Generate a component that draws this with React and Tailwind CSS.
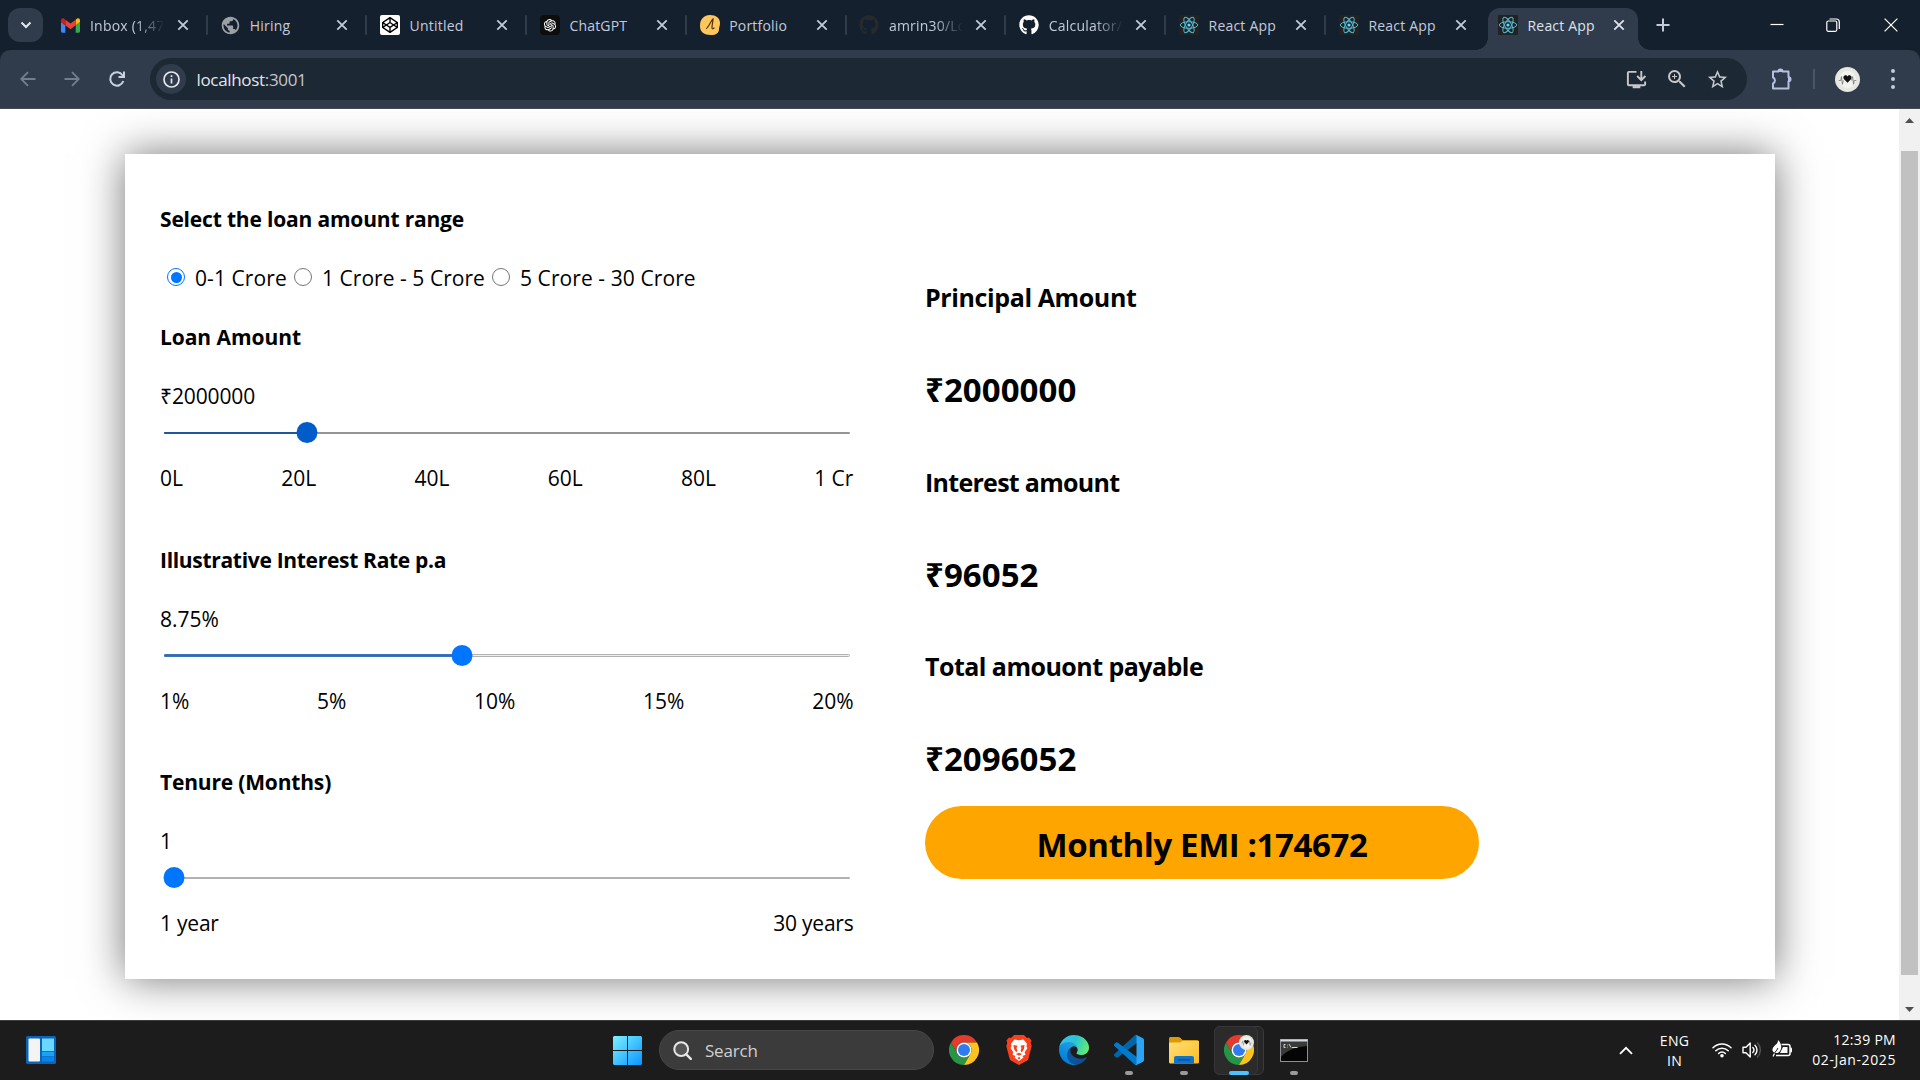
import React from "react";
import { FaGithub, FaCodepen } from "react-icons/fa";
import { AiOutlineOpenAI } from "react-icons/ai";
import { MdInstallDesktop, MdStarBorder, MdZoomIn, MdPublic } from "react-icons/md";

/* ---------- brand marks ---------- */

const Gmail = () => (
  <svg viewBox="52 42 88 66" className="h-[15px] w-[19px]">
    <path fill="#4285f4" d="M58 108h14V74L52 59v43c0 3.32 2.69 6 6 6" />
    <path fill="#34a853" d="M120 108h14c3.32 0 6-2.69 6-6V59l-20 15" />
    <path fill="#fbbc04" d="M120 48v26l20-15v-8c0-7.42-8.47-11.65-14.4-7.2" />
    <path fill="#ea4335" d="M72 74V48l24 18 24-18v26L96 92" />
    <path fill="#c5221f" d="M52 51v8l20 15V48l-5.6-4.2c-5.94-4.45-14.4-.22-14.4 7.2" />
  </svg>
);

const Globe = () => <MdPublic className="size-[21px] text-[#9aa0a6]" />;

const Codepen = () => (
  <div className="flex size-5 items-center justify-center rounded-[2px] bg-white">
    <FaCodepen className="size-4 text-black" />
  </div>
);

const OpenAI = () => (
  <div className="flex size-5 items-center justify-center rounded-[4px] bg-[#0d0d0d]">
    <AiOutlineOpenAI className="size-4 text-white" />
  </div>
);

const Portfolio = () => (
  <svg viewBox="0 0 20 20" className="size-5">
    <path d="M10 0C16 0 20 3 20 8c0 3-1 4-1 6 0 4-3 6-8 6C4 20 0 17 0 11 0 4 4 0 10 0z" fill="#ffc65c" />
    <path d="M6 13.500c2 0 4.800-7.500 7-9.500.2 3-1.400 6.500-1 9 .4 1.400 1.700.6 2.400-.4" fill="none" stroke="#4b3510" strokeWidth="1.200" />
  </svg>
);

const GithubDark = () => <FaGithub className="size-5 text-[#262a2d]" />;
const GithubLight = () => <FaGithub className="size-5 text-white" />;

const ReactMark = () => (
  <svg viewBox="0 0 20 20" className="size-5">
    <rect width="20" height="20" rx="1" fill="#222" />
    <g fill="none" stroke="#53b9d3" strokeWidth="1">
      <ellipse cx="10" cy="10" rx="8.700" ry="3.300" />
      <ellipse cx="10" cy="10" rx="8.700" ry="3.300" transform="rotate(60 10 10)" />
      <ellipse cx="10" cy="10" rx="8.700" ry="3.300" transform="rotate(120 10 10)" />
    </g>
    <circle cx="10" cy="10" r="1.600" fill="#61dafb" />
  </svg>
);

const Chrome = ({ className = "size-[30px]" }) => (
  <svg viewBox="0 0 48 48" className={className}>
    <path fill="#e33b2e" d="M24 12H44.8A24 24 0 0 0 3.200 12L13.600 30A12 12 0 0 1 24 12z" />
    <path fill="#269546" d="M13.600 30L3.200 12A24 24 0 0 0 24 48L34.400 30A12 12 0 0 1 13.600 30z" />
    <path fill="#fcc31e" d="M34.400 30L24 48A24 24 0 0 0 44.800 12H24A12 12 0 0 1 34.400 30z" />
    <circle cx="24" cy="24" r="12" fill="#fff" />
    <circle cx="24" cy="24" r="9.600" fill="#2f7bf0" />
  </svg>
);

const Edge = () => (
  <svg viewBox="0 0 256 256" className="size-[30px]">
    <defs>
      <linearGradient id="edgeA" x1="0" y1="0" x2="1" y2="0">
        <stop offset="0" stopColor="#0c59a4" />
        <stop offset="1" stopColor="#114a8b" />
      </linearGradient>
      <linearGradient id="edgeB" x1="0.700" y1="0.200" x2="0.300" y2="1">
        <stop offset="0" stopColor="#1b9de2" />
        <stop offset="1" stopColor="#0078d7" />
      </linearGradient>
      <linearGradient id="edgeC" x1="0" y1="0.300" x2="1" y2="0.600">
        <stop offset="0" stopColor="#35c1f1" />
        <stop offset="0.500" stopColor="#2bc3d2" />
        <stop offset="1" stopColor="#66eb6e" />
      </linearGradient>
    </defs>
    <g transform="translate(-4.630 -4.920)">
      <path fill="url(#edgeA)" d="M235.68 195.46a93.73 93.73 0 0 1-10.54 4.71 101.87 101.87 0 0 1-35.9 6.46c-47.32 0-88.54-32.55-88.54-74.32A31.48 31.48 0 0 1 117.13 105c-42.8 1.8-53.8 46.4-53.8 72.53 0 73.88 68.09 81.37 82.76 81.37 7.91 0 19.84-2.3 27-4.56l1.31-.44a128.34 128.34 0 0 0 66.6-52.8 4 4 0 0 0-5.32-5.64z" />
      <path fill="url(#edgeB)" d="M110.34 246.34A79.2 79.2 0 0 1 87.6 225a80.72 80.72 0 0 1 29.53-120c3.120-1.470 8.450-4.130 15.540-4a32.350 32.350 0 0 1 25.690 13 31.880 31.880 0 0 1 6.360 18.660c0-.21 24.460-79.600-80-79.600-43.900 0-80 41.660-80 78.210a130.150 130.150 0 0 0 12.110 56 128 128 0 0 0 156.380 67.110 75.550 75.550 0 0 1-62.780-8z" />
      <path fill="url(#edgeC)" d="M156.94 153.78c-.81 1.050-3.300 2.500-3.300 5.660 0 2.610 1.700 5.120 4.720 7.230 14.380 10 41.490 8.680 41.560 8.680a59.560 59.560 0 0 0 30.270-8.350 61.380 61.380 0 0 0 30.430-52.880c.26-22.410-8-37.310-11.340-43.910-21.190-41.440-66.920-65.280-116.670-65.280a128 128 0 0 0-128 126.200c.48-36.540 36.800-66.050 80-66.050 3.500 0 23.460.34 42 10.070 16.340 8.580 24.900 18.940 30.850 29.210 6.180 10.670 7.280 24.150 7.280 29.520s-2.740 13.330-7.800 19.900z" />
    </g>
  </svg>
);

const VSCode = () => (
  <svg viewBox="0 0 100 100" className="size-[30px]">
    <path fill="#0065a9" d="M96.4614 10.7962L75.8569 .8755C73.4719-.2728 70.6217.2116 68.75 2.0833L1.2986 63.5832C-.5157 65.2373-.5136 68.0937 1.3031 69.7452L6.8127 74.754C8.2979 76.1042 10.5347 76.2036 12.1338 74.9905L93.3609 13.3699C96.086 11.3026 100 13.2462 100 16.6667V16.4275C100 14.0265 98.6246 11.8378 96.4614 10.7962Z" />
    <path fill="#007acc" d="M96.4614 89.2038L75.8569 99.1245C73.4719 100.273 70.6217 99.7884 68.75 97.9167L1.2986 36.4169C-.5157 34.7627-.5136 31.9063 1.3031 30.2548L6.8127 25.246C8.2979 23.8958 10.5347 23.7964 12.1338 25.0095L93.3609 86.6301C96.086 88.6974 100 86.7538 100 83.3333V83.5726C100 85.9735 98.6246 88.1622 96.4614 89.2038Z" />
    <path fill="#2aa4f4" d="M75.8578 99.1263C73.4721 100.274 70.6219 99.7885 68.75 97.9166C71.0564 100.223 75 98.5895 75 95.3278V4.6721C75 1.4104 71.0564-.2231 68.75 2.0833C70.6219.2114 73.4721-.2737 75.8578.8736L96.4587 10.7807C98.6234 11.8217 100 14.0112 100 16.4132V83.5871C100 85.9891 98.6234 88.1786 96.4586 89.2196L75.8578 99.1263Z" />
  </svg>
);

const Brave = () => (
  <svg viewBox="0 0 26 30" className="h-[30px] w-[26px]">
    <path d="M8 0h10l3 3 2-.4L25.500 5.500 24.700 8l1 3-3.200 12.500c-.3 1-.9 1.700-1.700 2.300L13 30l-7.800-4.200c-.8-.6-1.400-1.300-1.700-2.300L.3 11l1-3L.5 5.500 3 2.600 5 3z" fill="#f8401c" />
    <path d="M8.500 4.500l4.500.8 4.500-.8 3.500 4.300-.6 2.400 1.100 1.800-2.800 4.200.8 2.600-3 1.200 1 1.500L13 26l-4.500-3.500 1-1.500-3-1.200.8-2.600L4.500 13l1.100-1.800L5 8.800z" fill="#fff" />
    <path d="M7.500 10l4 .8-1 2.200.9 3-1.200 1.200-2.200-3.200zM18.500 10l-4 .8 1 2.200-.9 3 1.200 1.200 2.200-3.200zM9.800 19l3.200-1.200 3.200 1.200-3.200 1.700zM11.300 23l1.700-.9 1.700.9-1.700 1.400z" fill="#f8401c" />
  </svg>
);

const Folder = () => (
  <svg viewBox="0 0 30 27" className="mt-px h-[27px] w-[30px]">
    <defs>
      <linearGradient id="folder" x1="0" y1="0" x2="1" y2="1">
        <stop offset="0" stopColor="#ffe07a" />
        <stop offset="1" stopColor="#fdbc22" />
      </linearGradient>
    </defs>
    <path d="M0 1.500C0 .7.7 0 1.500 0h8c.6 0 1 .2 1.500.6L13.500 3H28c1 0 2 .8 2 2v4H0z" fill="#dc9a05" />
    <path d="M0 6.500C0 6 .4 5.500 1 5.500h9.500c.6 0 1-.2 1.500-.6L13 4h16c.6 0 1 .4 1 1v20c0 .8-.6 1.500-1.500 1.500h-27C.6 26.500 0 25.800 0 25z" fill="url(#folder)" />
    <path d="M5 26.500V21c0-1.100.9-2 2-2h16c1.100 0 2 .9 2 2v5.500z" fill="#1173c8" />
    <rect x="8.500" y="22.200" width="13" height="1.200" rx=".6" fill="#084f94" />
  </svg>
);

const Terminal = () => (
  <svg viewBox="0 0 28 23" className="h-[23px] w-7">
    <rect x=".5" y=".5" width="27" height="22" fill="#050505" stroke="#8b9095" />
    <path d="M1 1h26v6C14 8 6 12 1 18z" fill="#3a3a3a" />
    <path d="M.5 1.500h27" stroke="#d5d8dc" strokeWidth="2" />
    <path d="M5.500 5.500H4v3h1.500M7.500 5.800v.6M7.500 7.800v.6M9 5l2 3.500M12 8.500h5.500" stroke="#e8e8e8" strokeWidth=".9" fill="none" />
  </svg>
);

const WindowsLogo = () => (
  <svg viewBox="0 0 29 29" className="size-[29px]">
    <defs>
      <linearGradient id="win" x1="0" y1="0" x2="1" y2="1">
        <stop offset="0" stopColor="#7df0ff" />
        <stop offset="1" stopColor="#0a95ff" />
      </linearGradient>
    </defs>
    <path fill="url(#win)" d="M1 0h13v14H0V1zM15 0h13l1 1v13H15zM0 15h14v14H1l-1-1zM15 15h14v13l-1 1H15z" />
  </svg>
);

const Widgets = () => (
  <svg viewBox="0 0 30 28" className="h-7 w-[30px]">
    <rect width="30" height="28" rx="1.500" fill="#0a64b8" />
    <rect x="2.500" y="2.500" width="11.500" height="23" rx="1" fill="#f4f4f4" />
    <rect x="16" y="2.500" width="12" height="12.500" fill="#68d8ff" />
    <rect x="16" y="15.700" width="12" height="4.500" fill="#1ba2f8" />
    <rect x="16" y="20.700" width="12" height="4.800" fill="#0a84ea" />
  </svg>
);

const Avatar = ({ className = "size-[25px]" }) => (
  <svg viewBox="0 0 26 26" className={className}>
    <circle cx="13" cy="13" r="13" fill="#e4e8e0" />
    <circle cx="13" cy="13" r="9" fill="#f1f3ee" />
    <path d="M4 14h2l.7-4 1 8 1-4M17.300 14l1-4 1 8 .8-4h2" fill="none" stroke="#777" strokeWidth=".9" />
    <path d="M13 16.500l-3.600-3.800c-1.400-1.800-.3-4.200 1.600-4.200 1 0 1.600.5 2 1.300.4-.8 1-1.300 2-1.300 1.900 0 3 2.400 1.600 4.200z" fill="#111" />
  </svg>
);

/* ---------- browser chrome ---------- */

const Close = ({ className = "text-[#c2cadb]" }) => (
  <svg viewBox="0 0 12 12" className={`size-3 shrink-0 ${className}`}>
    <path d="M1.300 1.300l9.400 9.400M10.700 1.300l-9.400 9.400" stroke="currentColor" strokeWidth="1.800" />
  </svg>
);

const tabs = [
  { title: "Inbox (1,47", Icon: Gmail, fade: true },
  { title: "Hiring", Icon: Globe },
  { title: "Untitled", Icon: Codepen },
  { title: "ChatGPT", Icon: OpenAI },
  { title: "Portfolio", Icon: Portfolio },
  { title: "amrin30/Lo", Icon: GithubDark, fade: true },
  { title: "Calculator/", Icon: GithubLight, fade: true },
  { title: "React App", Icon: ReactMark },
  { title: "React App", Icon: ReactMark, last: true },
];

const fadeMask = "[mask-image:linear-gradient(to_right,black_62%,transparent_100%)]";

function Tab({ title, Icon, fade, last }) {
  return (
    <div className="flex h-[50px] w-[159.8px] shrink-0 items-center pl-[12px]">
      <div className="flex w-[21px] shrink-0 justify-center"><Icon /></div>
      <span className={`mt-px ml-[9px] w-[74px] overflow-hidden text-[14px] leading-5 tracking-[0.200px] whitespace-nowrap text-[#c2cadb] ${fade ? fadeMask : ""}`}>{title}</span>
      <Close className="ml-[12.500px] text-[#c2cadb]" />
      {!last && <div className="ml-[17px] h-5 w-[2px] rounded bg-[#303b4b]" />}
    </div>
  );
}

function TabStrip() {
  return (
    <div className="flex h-[50px] items-center bg-[#15202e]">
      <div className="ml-2 flex h-[34px] w-[35px] items-center justify-center rounded-xl bg-[#303b4b]">
        <svg viewBox="0 0 12 8" className="h-2 w-3"><path d="M1.500 1.500L6 6l4.500-4.500" fill="none" stroke="#e3e7ef" strokeWidth="2" /></svg>
      </div>
      <div className="ml-[5px] flex">
        {tabs.map((t, i) => <Tab key={i} {...t} />)}
      </div>
      <div className="-ml-[10.200px] flex h-[50px] items-end">
        <div className="h-3 w-3 bg-[radial-gradient(circle_at_0_0,#15202e_11.500px,#303b4b_12px)]" />
        <div className="flex h-[42px] w-[150px] items-center rounded-t-xl bg-[#303b4b] pb-2 pl-[10px]">
          <ReactMark />
          <span className="mt-px ml-[9.500px] w-[74px] text-[14px] leading-5 tracking-[0.200px] whitespace-nowrap text-[#dee3ee]">React App</span>
          <Close className="ml-[11.500px] text-[#dee3ee]" />
        </div>
        <div className="h-3 w-3 bg-[radial-gradient(circle_at_100%_0,#15202e_11.500px,#303b4b_12px)]" />
      </div>
      <svg viewBox="0 0 14 14" className="ml-[6px] size-[14px]"><path d="M7 .5v13M.5 7h13" stroke="#c2cadb" strokeWidth="2" /></svg>
      <svg viewBox="0 0 14 14" className="ml-[100px] size-[14px]"><path d="M.5 6.500h13" stroke="#fff" strokeWidth="1.200" /></svg>
      <svg viewBox="0 0 14 14" className="ml-[42px] size-[14px]">
        <path d="M3.500 1h6.800A3 3 0 0 1 13.300 4v7" fill="none" stroke="#fff" strokeWidth="1.200" />
        <rect x=".8" y="3" width="10" height="10.300" rx="1.500" fill="none" stroke="#fff" strokeWidth="1.200" />
      </svg>
      <svg viewBox="0 0 14 14" className="ml-[44px] size-[14px]"><path d="M.6.6l12.800 12.800M13.400.6L.6 13.400" stroke="#fff" strokeWidth="1.200" /></svg>
    </div>
  );
}

const Arrow = ({ className = "" }) => (
  <svg viewBox="0 0 16 16" className={`size-4 ${className}`}>
    <path d="M15.500 8H1.500M8 1.200L1.200 8 8 14.800" fill="none" stroke="#737d8d" strokeWidth="1.800" />
  </svg>
);

function Toolbar() {
  return (
    <div className="bg-[#15202e]">
      <div className="flex h-[59px] items-center rounded-t-[10px] border-b border-[#4a4a52] bg-[#303b4b]">
        <Arrow className="ml-5" />
        <Arrow className="ml-[28px] rotate-180" />
        <svg viewBox="0 0 18 18" className="ml-[28px] size-[18px]">
          <path d="M15.300 11A6.700 6.700 0 1 1 14.500 5.200L16 7" fill="none" stroke="#c9d0e0" strokeWidth="2" />
          <path d="M16 1.500v5.500H10.500" fill="none" stroke="#c9d0e0" strokeWidth="2" />
        </svg>
        <div className="ml-6 flex h-[42px] w-[1597px] items-center rounded-full bg-[#1c2935]">
          <div className="ml-[6px] flex size-[30px] items-center justify-center rounded-full bg-[#303b4b]">
            <svg viewBox="0 0 17 17" className="size-[17px]">
              <circle cx="8.500" cy="8.500" r="7.500" fill="none" stroke="#e3e7ef" strokeWidth="1.700" />
              <path d="M8.500 7.500v5M8.500 4.300v1.700" stroke="#e3e7ef" strokeWidth="1.700" />
            </svg>
          </div>
          <span className="mt-px ml-[10.500px] text-[17px] leading-6 tracking-[-0.330px] text-[#e3e5e8]">localhost<span className="text-[#c3c7cc]">:3001</span></span>
          <div className="mr-[18px] ml-auto flex items-center gap-[17px] text-[#c7c7cb]">
            <MdInstallDesktop className="size-[23px]" />
            <MdZoomIn className="size-[24px]" />
            <MdStarBorder className="size-[23px]" />
          </div>
        </div>
        <svg viewBox="0 0 22 22" className="mb-px ml-[24px] size-[22px]">
          <path d="M2 3.500h5.500a2 2 0 0 1 4 0H17.500v5.700a2 2 0 0 1 0 4V20.500H2v-5a3.300 3.300 0 0 0 0-6z" fill="none" stroke="#b4c2e0" strokeWidth="2" strokeLinejoin="round" />
          <path d="M7.500 3.500a2 2 0 0 1 4 0zM17.500 9.200a2 2 0 0 1 0 4z" fill="#b4c2e0" stroke="#b4c2e0" />
        </svg>
        <div className="ml-[20px] h-5 w-[2px] bg-[#4b5566]" />
        <Avatar className="ml-[20px] size-[25px]" />
        <div className="ml-[31px] flex flex-col gap-[4px]">
          <div className="size-1 rounded-full bg-[#c2cadb]" />
          <div className="size-1 rounded-full bg-[#c2cadb]" />
          <div className="size-1 rounded-full bg-[#c2cadb]" />
        </div>
      </div>
    </div>
  );
}

/* ---------- calculator page ---------- */

function Radio({ checked, label, className }) {
  return (
    <label className={`flex shrink-0 items-center ${className}`}>
      <span className={`mb-[2px] flex size-[18px] shrink-0 items-center justify-center rounded-full border-[1.500px] ${checked ? "border-[#0075ff]" : "border-[#767676]"}`}>
        {checked && <span className="size-[11px] rounded-full bg-[#0075ff]" />}
      </span>
      <span className="ml-[10px] whitespace-nowrap">{label}</span>
    </label>
  );
}

function Slider({ fill, thin, fillClass, trackClass, thumbClass }) {
  return (
    <div className="relative mx-[4px] mt-[12px] flex h-[21px] items-center">
      <div className={`w-full rounded-sm ${thin ? "mt-px h-[2px]" : "h-[3px] border"} ${trackClass}`}>
        <div className={`rounded-sm ${thin ? "h-[2px]" : "-mt-px -ml-px h-[3px]"} ${fillClass}`} style={{ width: fill }} />
      </div>
      <div className={`absolute top-0 size-[21px] -translate-x-1/2 rounded-full ${thumbClass}`} style={{ left: fill }} />
    </div>
  );
}

function Section({ title, titleClass, value, valueClass = "", slider, marks, marksClass = "" }) {
  return (
    <div>
      <h3 className={`mb-[31px] font-bold ${titleClass}`}>{title}</h3>
      <p className={valueClass}>{value}</p>
      <Slider {...slider} />
      <div className={`mr-[0.500px] flex justify-between ${marksClass}`}>
        {marks.map((m) => <span key={m}>{m}</span>)}
      </div>
    </div>
  );
}

function Calculator() {
  return (
    <div className="mt-[45px] ml-[125px] flex h-[825px] w-[1650px] bg-white text-black shadow-[0_0_40px_#757575]">
      <div className="ml-[35px] w-[694px] pt-[51px] text-[21px] leading-[28px]">
        <h3 className="font-bold tracking-[-0.180px]">Select the loan amount range</h3>
        <div className="my-[31px] flex pl-[7px]">
          <Radio checked label="0-1 Crore" className="w-[127px] tracking-[0.080px]" />
          <Radio label="1 Crore - 5 Crore" className="w-[198px] tracking-[0.040px]" />
          <Radio label="5 Crore - 30 Crore" className="tracking-[0.080px]" />
        </div>
        <Section
          title="Loan Amount" titleClass="tracking-[-0.060px]"
          value="₹2000000" valueClass="tracking-[-0.130px]"
          slider={{ fill: "143px", thin: true, fillClass: "bg-[#21559c]", trackClass: "bg-[#949494]", thumbClass: "bg-[#005cc8]" }}
          marks={["0L", "20L", "40L", "60L", "80L", "1 Cr"]} marksClass="mt-[21px] mb-[54px]"
        />
        <Section
          title="Illustrative Interest Rate p.a" titleClass="tracking-[-0.310px]"
          value="8.75%"
          slider={{ fill: "298px", fillClass: "border-y border-[#3a73b8] bg-[#0075ff]", trackClass: "border-[#b2b2b2] bg-[#efefef]", thumbClass: "bg-[#0075ff]" }}
          marks={["1%", "5%", "10%", "15%", "20%"]} marksClass="mt-[21px] mb-[53px]"
        />
        <Section
          title="Tenure (Months)" titleClass="tracking-[-0.180px]"
          value="1"
          slider={{ fill: "10px", thin: true, fillClass: "bg-[#0075ff]", trackClass: "bg-[#b2b2b2]", thumbClass: "bg-[#0075ff]" }}
          marks={["1 year", "30 years"]} marksClass="mt-[21px] tracking-[-0.220px]"
        />
      </div>
      <div className="ml-[71px] pt-[126px] font-bold">
        <h2 className="text-[25px] leading-[34px] tracking-[-0.390px]">Principal Amount</h2>
        <p className="mt-[54px] text-[33px] leading-[44px] tracking-[0.050px]">₹2000000</p>
        <h2 className="mt-[53px] text-[25px] leading-[34px] tracking-[-0.720px]">Interest amount</h2>
        <p className="mt-[54px] text-[33px] leading-[44px] tracking-[0.050px]">₹96052</p>
        <h2 className="mt-[52px] text-[25px] leading-[34px] tracking-[-0.530px]">Total amouont payable</h2>
        <p className="mt-[54px] text-[33px] leading-[44px] tracking-[0.050px]">₹2096052</p>
        <div className="mt-[25px] h-[73px] w-[554px] rounded-full bg-[#ffa500] text-center text-[33px] leading-[78px] tracking-[-0.400px]">
          Monthly EMI :174672
        </div>
      </div>
    </div>
  );
}

function Scrollbar() {
  return (
    <div className="flex h-full w-[21px] flex-col items-center bg-[#f1f1f1]">
      <svg viewBox="0 0 9 5" className="mt-[9px] h-[5px] w-[9px]"><path d="M0 5L4.500 0 9 5z" fill="#505050" /></svg>
      <div className="mt-[28px] h-[824px] w-[17px] bg-[#c1c1c1]" />
      <svg viewBox="0 0 9 5" className="mt-[32px] h-[5px] w-[9px]"><path d="M0 0l4.500 5L9 0z" fill="#505050" /></svg>
    </div>
  );
}

/* ---------- taskbar ---------- */

function TaskbarApp({ children, active, dot }) {
  return (
    <div className="flex h-full w-[55px] shrink-0 items-center justify-center">
      <div className="relative flex h-[49px] w-full items-center justify-center">
        {children}
        {dot && <div className="absolute bottom-0 h-[4px] w-2 rounded-full bg-[#9a9a9a]" />}
        {active && <div className="absolute bottom-0 h-[4px] w-5 rounded-full bg-[#4cc2ff]" />}
      </div>
    </div>
  );
}

function Taskbar() {
  return (
    <div className="flex h-[60px] items-center border-t border-[#3d3d3d] bg-[#1c1c1c] pb-px text-white">
      <div className="ml-[26px]"><Widgets /></div>
      <div className="ml-[557px]"><WindowsLogo /></div>
      <div className="ml-[17px] flex h-10 w-[275px] items-center rounded-full border border-[#474747] bg-[#3b3b3b] pl-[13px]">
        <svg viewBox="0 0 19 19" className="size-[19px]">
          <circle cx="8.200" cy="8.200" r="6.900" fill="#555" stroke="#e8e8e8" strokeWidth="2" />
          <path d="M13.300 13.300l4.500 4.500" stroke="#e8e8e8" strokeWidth="2.400" strokeLinecap="round" />
        </svg>
        <span className="mt-px ml-[13px] text-[17px] leading-6 tracking-[-0.200px] text-[#d0d0d0]">Search</span>
      </div>
      <div className="ml-[2px] flex h-full">
        <TaskbarApp><Chrome /></TaskbarApp>
        <TaskbarApp><Brave /></TaskbarApp>
        <TaskbarApp><Edge /></TaskbarApp>
        <TaskbarApp dot><VSCode /></TaskbarApp>
        <TaskbarApp dot><Folder /></TaskbarApp>
        <TaskbarApp active>
          <div className="absolute top-0 left-[3px] h-[49px] w-[50px] rounded-md border border-[#3a3a3a] bg-[#262626]" />
          <div className="absolute top-0 left-[3px] h-[49px] w-[44px] rounded-md border border-[#363636] bg-[#2b2b2b]" />
          <Chrome className="relative size-[30px]" />
          <Avatar className="absolute top-[9px] left-[27.500px] size-[15px]" />
        </TaskbarApp>
        <TaskbarApp dot><Terminal /></TaskbarApp>
      </div>
      <div className="mr-[24px] ml-auto flex items-center text-[14px] leading-5">
        <svg viewBox="0 0 14 9" className="h-[9px] w-[14px]"><path d="M1 7.800L7 1.800l6 6" fill="none" stroke="#fff" strokeWidth="1.800" /></svg>
        <div className="mt-px ml-[27px] text-center tracking-[0.300px]"><div>ENG</div><div>IN</div></div>
        <svg viewBox="0 0 20 16" className="ml-[23px] h-4 w-5">
          <g fill="none" stroke="#fff" strokeWidth="1.500" strokeLinecap="round">
            <path d="M1 5.800a12.700 12.700 0 0 1 18 0" />
            <path d="M3.800 8.700a8.800 8.800 0 0 1 12.400 0" />
            <path d="M6.600 11.500a4.800 4.800 0 0 1 6.800 0" />
          </g>
          <circle cx="10" cy="13.800" r="1.800" fill="#fff" />
        </svg>
        <svg viewBox="0 0 20 18" className="ml-[10px] h-[18px] w-5">
          <g fill="none" stroke="#fff" strokeWidth="1.400" strokeLinejoin="round" strokeLinecap="round">
            <path d="M1 6.200h3L8.200 2v14L4 11.800H1z" />
            <path d="M10.800 6.500a3.600 3.600 0 0 1 0 5" />
            <path d="M13 4.200a6.800 6.800 0 0 1 0 9.600" />
            <path d="M15.500 2a10 10 0 0 1 0 14" stroke="#555" />
          </g>
        </svg>
        <svg viewBox="0 0 21 18" className="mb-[2px] ml-[10px] h-[18px] w-[21px]">
          <path d="M9.500 4.500H16a2 2 0 0 1 2 2v7a2 2 0 0 1-2 2H4" fill="none" stroke="#fff" strokeWidth="1.500" />
          <path d="M18.300 7.500h.7a1 1 0 0 1 1 1v3a1 1 0 0 1-1 1h-.7z" fill="#fff" />
          <path d="M11 7h4.500v6H8z" fill="#fff" />
          <path d="M6 0c4 3.500 4.500 10 .5 12.500C4 14 1 12.500.5 10.500-.2 7.500 3 5.500 4.500 4 5.500 3 6 1.500 6 0z" fill="#fff" />
          <path d="M1 16c1-3 3.500-5 5-8" stroke="#1c1c1c" strokeWidth="1" fill="none" />
          <path d="M1 16.500l1.500-3" stroke="#fff" strokeWidth="1.300" />
        </svg>
        <div className="ml-[19px] text-right"><div className="tracking-[0.300px]">12:39 PM</div><div className="tracking-[0.600px]">02-Jan-2025</div></div>
      </div>
    </div>
  );
}

export default function App() {
  return (
    <div className="flex h-[1080px] w-[1920px] flex-col overflow-hidden bg-white font-['Open_Sans','Noto_Sans',sans-serif]">
      <TabStrip />
      <Toolbar />
      <div className="flex h-[911px] justify-between overflow-hidden bg-white">
        <Calculator />
        <Scrollbar />
      </div>
      <Taskbar />
    </div>
  );
}
